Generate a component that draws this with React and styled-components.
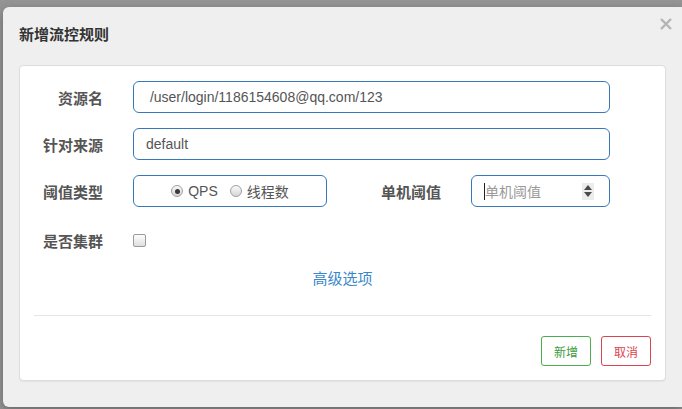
import React from "react";
import styled, { createGlobalStyle } from "styled-components";

const GlobalStyle = createGlobalStyle`
  html, body { margin: 0; padding: 0; }
  body {
    background: #949494;
    font-family: "Liberation Sans", Arial, "Noto Sans CJK SC", sans-serif;
    overflow: hidden;
  }
  * { box-sizing: border-box; }
`;

const Page = styled.div`
  width: 682px;
  height: 409px;
  padding: 7px 0 2px 3px;
`;

const Modal = styled.div`
  height: 400px;
  background: #efefef;
  border-radius: 6px 0 0 6px;
  display: flex;
  flex-direction: column;
  box-shadow: 0 3px 9px rgba(0, 0, 0, 0.3);
`;

const Header = styled.div`
  position: relative;
  height: 52px;
  padding: 0 16px;
  display: flex;
  align-items: center;
`;

const Title = styled.h4`
  margin: 0;
  font-family: "Noto Sans CJK SC", sans-serif;
  font-size: 15px;
  font-weight: 700;
  color: #333;
`;

const Close = styled.button`
  position: absolute;
  top: 11px;
  right: 10px;
  width: 12px;
  height: 12px;
  padding: 0;
  border: 0;
  background: transparent;
  display: flex;
`;

const Card = styled.div`
  margin: 6px 16px 0;
  background: #fff;
  border: 1px solid #ddd;
  border-radius: 4px;
  padding: 15px 14px 14px;
  box-shadow: 0 1px 1px rgba(0, 0, 0, 0.05);
`;

const Row = styled.div`
  display: flex;
  align-items: center;
  height: ${(p) => p.$h || 32}px;
  margin-bottom: ${(p) => (p.$mb ?? 15)}px;
`;

const Label = styled.label`
  width: ${(p) => p.$w || 69}px;
  margin-right: 30px;
  text-align: right;
  font-family: "Noto Sans CJK SC", sans-serif;
  font-size: 15px;
  font-weight: 700;
  color: #555;
  flex: none;
`;

const TextInput = styled.input`
  width: ${(p) => p.$w}px;
  height: 32px;
  border: 1px solid #3678b8;
  border-radius: 6px;
  padding: 0 12px;
  font-family: "Liberation Sans", Arial, sans-serif;
  font-size: 14px;
  color: #555;
  background: #fff;
  outline: none;
`;

const RadioBox = styled.div`
  width: 194px;
  height: 32px;
  border: 1px solid #3678b8;
  border-radius: 6px;
  display: flex;
  align-items: center;
  justify-content: center;
  gap: 12px;
  flex: none;
`;

const RadioItem = styled.span`
  display: flex;
  align-items: center;
  gap: 5px;
  font-family: "Liberation Sans", Arial, "Noto Sans CJK SC", sans-serif;
  font-size: 14px;
  color: #555;
`;

const RadioDot = styled.span`
  width: 12px;
  height: 12px;
  border-radius: 50%;
  border: 1px solid #a0a0a0;
  background: linear-gradient(#fafafa, #d6d6d6);
  display: flex;
  align-items: center;
  justify-content: center;
  &::after {
    content: "";
    width: 5px;
    height: 5px;
    border-radius: 50%;
    background: ${(p) => (p.$checked ? "#3a3a3a" : "transparent")};
  }
`;

const NumberBox = styled.div`
  width: 139px;
  height: 32px;
  border: 1px solid #3678b8;
  border-radius: 6px;
  display: flex;
  align-items: center;
  padding: 0 15px 0 12px;
  flex: none;
`;

const Caret = styled.span`
  width: 1px;
  height: 17px;
  background: #222;
  flex: none;
`;

const NumberInput = styled.input`
  flex: 1;
  min-width: 0;
  border: 0;
  outline: none;
  padding: 0;
  font-family: "Noto Sans CJK SC", sans-serif;
  font-size: 14px;
  color: #555;
  &::placeholder { color: #9a9a9a; }
`;

const Spinner = styled.span`
  width: 12px;
  height: 17px;
  background: #ececec;
  display: flex;
  flex-direction: column;
  align-items: center;
  justify-content: center;
  gap: 2px;
  flex: none;
`;

const Tri = styled.span`
  width: 0;
  height: 0;
  border-left: 4px solid transparent;
  border-right: 4px solid transparent;
  ${(p) =>
    p.$up
      ? "border-bottom: 5px solid #4a4a4a;"
      : "border-top: 5px solid #4a4a4a;"}
`;

const Check = styled.span`
  width: 13px;
  height: 13px;
  border: 1px solid #9a9a9a;
  border-radius: 2px;
  background: linear-gradient(#fdfdfd, #dedede);
`;

const LinkRow = styled.div`
  text-align: center;
  margin-top: 10px;
  line-height: 20px;
`;

const Link = styled.a`
  font-family: "Noto Sans CJK SC", sans-serif;
  font-size: 15px;
  color: #3a88c9;
  text-decoration: none;
`;

const Divider = styled.hr`
  margin: 26px 0 20px;
  border: 0;
  border-top: 1px solid #e5e5e5;
`;

const Footer = styled.div`
  display: flex;
  justify-content: flex-end;
  gap: 10px;
`;

const Button = styled.button`
  height: 30px;
  padding: 0 12px;
  background: #fff;
  border: 1px solid ${(p) => p.$color};
  color: ${(p) => p.$text};
  border-radius: 3px;
  font-family: "Noto Sans CJK SC", sans-serif;
  font-size: 12px;
`;

export default function App() {
  return (
    <>
      <GlobalStyle />
      <Page>
        <Modal>
          <Header>
            <Title>新增流控规则</Title>
            <Close aria-label="close">
              <svg width="12" height="12" viewBox="0 0 12 12">
                <path d="M1 1 L11 11 M11 1 L1 11" stroke="#b5b5b5" strokeWidth="2.4" />
              </svg>
            </Close>
          </Header>
          <Card>
            <Row>
              <Label>资源名</Label>
              <TextInput $w={477} defaultValue=" /user/login/1186154608@qq.com/123" />
            </Row>
            <Row>
              <Label>针对来源</Label>
              <TextInput $w={477} defaultValue="default" />
            </Row>
            <Row>
              <Label>阈值类型</Label>
              <RadioBox>
                <RadioItem>
                  <RadioDot $checked />
                  QPS
                </RadioItem>
                <RadioItem>
                  <RadioDot />
                  线程数
                </RadioItem>
              </RadioBox>
              <Label $w={114}>单机阈值</Label>
              <NumberBox>
                <Caret />
                <NumberInput placeholder="单机阈值" />
                <Spinner>
                  <Tri $up />
                  <Tri />
                </Spinner>
              </NumberBox>
            </Row>
            <Row $h={36} $mb={0}>
              <Label>是否集群</Label>
              <Check />
            </Row>
            <LinkRow>
              <Link href="#">高级选项</Link>
            </LinkRow>
            <Divider />
            <Footer>
              <Button $color="#4cae4c" $text="#3d9b3d">新增</Button>
              <Button $color="#d9434e" $text="#d9434e">取消</Button>
            </Footer>
          </Card>
        </Modal>
      </Page>
    </>
  );
}
